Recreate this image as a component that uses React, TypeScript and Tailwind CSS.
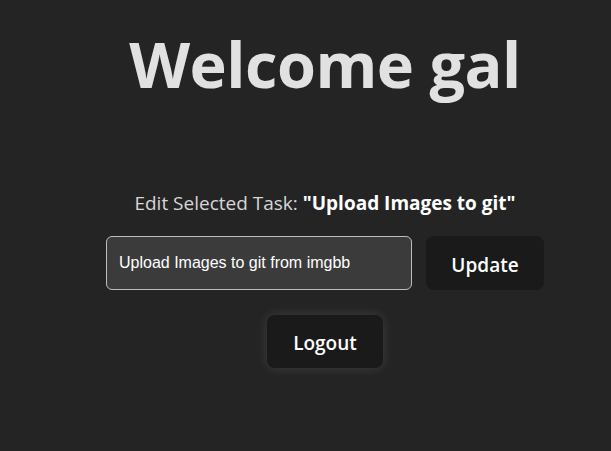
import { useState } from 'react'

export default function App() {
  const [task, setTask] = useState('Upload Images to git from imgbb')

  return (
    <div className="min-h-screen w-full bg-[#242424] text-[#e1e1e1] font-['Open_Sans',sans-serif] pl-[39px]">
      <div className="flex flex-col items-center pt-[32px]">
        <h1 className="text-[63px] font-bold leading-[63px] tracking-[-0.5px]">Welcome gal</h1>

        <p className="mt-[95px] text-[19px] text-[#d6d6d6] leading-[26px]">
          Edit Selected Task: <span className="font-bold text-white">"Upload Images to git"</span>
        </p>

        <div className="mt-[20px] flex items-center gap-[14px]">
          <input
            value={task}
            onChange={(e) => setTask(e.target.value)}
            className="w-[306px] h-[54px] px-[12px] rounded-[6px] border border-[#bdbdbd] bg-[#3b3b3b] text-white text-[16px] font-['Liberation_Sans',sans-serif] outline-none"
          />
          <button className="w-[118px] h-[54px] pt-[4px] rounded-[8px] bg-[#1a1a1a] text-white text-[19px] font-semibold">
            Update
          </button>
        </div>

        <button className="mt-[25px] w-[116px] h-[53px] pt-[4px] rounded-[8px] bg-[#1a1a1a] text-white text-[19px] font-semibold shadow-[0_0_12px_rgba(255,255,255,0.12)]">
          Logout
        </button>
      </div>
    </div>
  )
}
